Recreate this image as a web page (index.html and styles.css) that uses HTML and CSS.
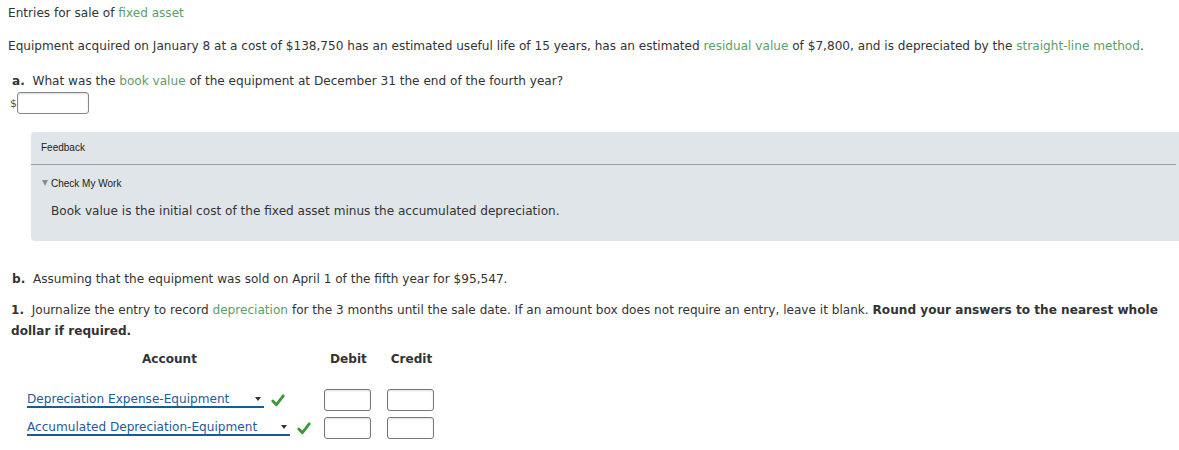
FILE: index.html
```html
<!DOCTYPE html>
<html>
<head>
<meta charset="utf-8">
<link rel="stylesheet" href="styles.css">
</head>
<body>
<div class="page">
  <div class="title">Entries for sale of <span class="term">fixed asset</span></div>
  <p class="para">Equipment acquired on January 8 at a cost of $138,750 has an estimated useful life of 15 years, has an estimated <span class="term">residual value</span> of $7,800, and is depreciated by the <span class="term">straight-line method</span>.</p>
  <div class="q qa"><b class="lbl">a.</b>&nbsp; What was the <span class="term">book value</span> of the equipment at December 31 the end of the fourth year?</div>
  <div class="answer"><span class="dollar">$</span><span class="inbox"></span></div>
  <div class="feedback">
    <div class="fb-head">Feedback</div>
    <div class="fb-rule"></div>
    <div class="fb-check"><span class="tri"></span>Check My Work</div>
    <div class="fb-body">Book value is the initial cost of the fixed asset minus the accumulated depreciation.</div>
  </div>
  <div class="q qb"><b class="lbl">b.</b>&nbsp; Assuming that the equipment was sold on April 1 of the fifth year for $95,547.</div>
  <div class="q q1"><b class="lbl">1.</b>&nbsp; Journalize the entry to record <span class="term">depreciation</span> for the 3 months until the sale date. If an amount box does not require an entry, leave it blank. <b>Round your answers to the nearest whole</b> <b>dollar if required.</b></div>
  <div class="journal">
    <div class="jhead">
      <div class="h-acct">Account</div>
      <div class="h-deb">Debit</div>
      <div class="h-cred">Credit</div>
    </div>
    <div class="jrow r1">
      <div class="acct">
        <span class="sel s1">Depreciation Expense-Equipment<span class="caret"></span></span>
        <svg class="chk" width="14" height="13" viewBox="0 0 14 13"><path d="M1.8 7 L5.3 10.8 L12.2 1.8" fill="none" stroke="#3a9a3a" stroke-width="2.8" stroke-linecap="round" stroke-linejoin="round"/></svg>
      </div>
      <span class="cell"></span><span class="cell"></span>
    </div>
    <div class="jrow r2">
      <div class="acct">
        <span class="sel s2">Accumulated Depreciation-Equipment<span class="caret"></span></span>
        <svg class="chk" width="14" height="13" viewBox="0 0 14 13"><path d="M1.8 7 L5.3 10.8 L12.2 1.8" fill="none" stroke="#3a9a3a" stroke-width="2.8" stroke-linecap="round" stroke-linejoin="round"/></svg>
      </div>
      <span class="cell"></span><span class="cell"></span>
    </div>
  </div>
</div>
</body>
</html>
```
FILE: styles.css
```css
html, body { margin: 0; padding: 0; background: #fff; }
body { font-family: Verdana, "DejaVu Sans", sans-serif; font-size: 12.1px; color: #333; }
.page { padding: 5px 0 0 8px; }
.term { color: #5a9e6a; }
.title { line-height: 16px; }
.para { margin: 17px 0 0 0; line-height: 16px; }
.q { line-height: 16px; }
.q .lbl { font-weight: bold; }
.qa { margin: 19px 0 0 4px; }
.answer { display: flex; align-items: flex-start; margin: 3px 0 0 2px; }
.dollar { font-size: 11px; line-height: 14px; margin-top: 5px; color: #555; }
.inbox { display: block; width: 70px; height: 20px; border: 1px solid #888; border-radius: 3px; box-shadow: inset 0 1px 2px rgba(0,0,0,0.15); }
.feedback { margin: 18px 0 0 23px; background: #dfe5e8; border-radius: 4px 0 0 4px; height: 109px; padding: 0; }
.fb-head { font-family: "Liberation Sans", Arial, sans-serif; font-size: 10px; color: #222; padding: 10px 0 0 10px; line-height: 12px; }
.fb-rule { height: 1px; background: #9aa1a4; margin: 10px 3px 0 0; }
.fb-check { display: flex; align-items: center; font-family: "Liberation Sans", Arial, sans-serif; font-size: 10px; color: #222; padding: 13px 0 0 11px; line-height: 12px; }
.tri { display: inline-block; width: 0; height: 0; border-left: 3px solid transparent; border-right: 3px solid transparent; border-top: 6px solid #8a8f92; margin-right: 3px; margin-top: -2px; }
.fb-body { padding: 13px 0 0 20px; line-height: 16px; }
.qb { margin: 30px 0 0 4px; }
.q1 { margin: 13px 0 0 3px; line-height: 21px; padding-right: 12px; }
.journal { margin-top: 9px; }
.jhead { display: flex; font-weight: bold; line-height: 16px; }
.h-acct { width: 323px; text-align: center; }
.h-deb { width: 63px; text-align: center; margin-left: -14px; }
.h-cred { width: 63px; text-align: center; }
.jrow { display: flex; align-items: center; }
.r1 { margin-top: 22px; }
.r2 { margin-top: 6px; }
.acct { width: 297px; padding-left: 19px; display: flex; align-items: center; }
.sel { position: relative; display: inline-block; box-sizing: border-box; white-space: nowrap; color: #1d5b99; line-height: 14px; border-bottom: 2px solid #1d5b8f; padding-right: 16px; }
.s1 { width: 237px; }
.s2 { width: 263px; }
.caret { position: absolute; right: 3px; top: 5px; width: 0; height: 0; border-left: 3.5px solid transparent; border-right: 3.5px solid transparent; border-top: 4px solid #333; }
.chk { margin-left: 7px; }
.cell { display: block; width: 45px; height: 20px; border: 1px solid #777; border-radius: 3px; margin-right: 16px; box-shadow: inset 0 1px 2px rgba(0,0,0,0.12); }
```
